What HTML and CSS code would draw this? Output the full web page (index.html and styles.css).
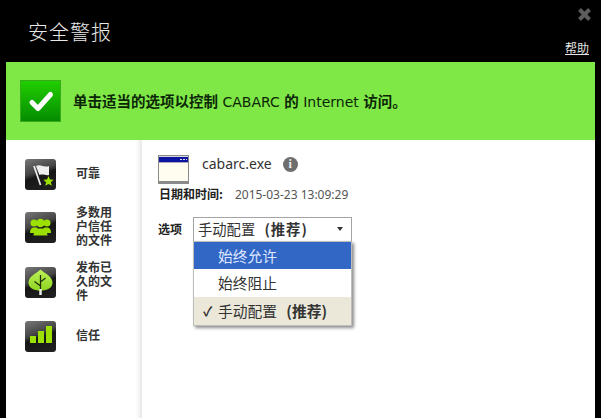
FILE: index.html
```html
<!DOCTYPE html>
<html lang="zh">
<head>
<meta charset="utf-8">
<title>安全警报</title>
<link rel="stylesheet" href="styles.css">
</head>
<body>
<div class="window">
  <header class="header">
    <h1 class="title">安全警报</h1>
    <svg class="close" width="15" height="15" viewBox="0 0 15 15"><path d="M2.500 2.500 12.500 12.500M12.500 2.500 2.500 12.500" stroke="#5c5c5c" stroke-width="4"/></svg>
    <a class="help">帮助</a>
  </header>
  <section class="banner">
    <div class="check">
      <svg width="41" height="42" viewBox="0 0 41 42"><path d="M12 22.500 18 28.500 30.500 14.500" fill="none" stroke="#fff" stroke-width="5" stroke-linecap="round" stroke-linejoin="round"/></svg>
    </div>
    <p class="banner-text"><b>单击适当的选项以控制</b> CABARC <b>的</b> Internet <b>访问。</b></p>
  </section>
  <section class="content">
    <aside class="sidebar">
      <div class="side-item">
        <div class="side-icon">
          <svg width="31" height="31" viewBox="0 0 31 31"><path d="M9 7 15.500 26" stroke="#eee" stroke-width="1.700"/><path d="M11 7c4-2.500 8 2 13 0v9c-3 1-6-1.500-9.500 0z" fill="#eee"/><path d="m23.500 17 1.500 3.500 3.700.3-2.800 2.400.9 3.600-3.300-1.900-3.300 1.900.9-3.600-2.800-2.400 3.700-.3z" fill="#9be000"/></svg>
        </div>
        <span class="side-label">可靠</span>
      </div>
      <div class="side-item">
        <div class="side-icon">
          <svg width="31" height="31" viewBox="0 0 31 31"><g fill="#9be000"><circle cx="9" cy="11" r="3.500"/><circle cx="22" cy="11" r="3.500"/><path d="M5 21c0-3.500 1-4.500 3-5.500h4l3 5.500zM26 21c0-3.500-1-4.500-3-5.500h-4l-3 5.500z"/><circle cx="15.500" cy="11" r="4.300"/><path d="M8.500 23.500c.5-5.500 3-6 4.500-7h5c1.500 1 4 1.500 4.500 7z"/></g></svg>
        </div>
        <span class="side-label">多数用户信任的文件</span>
      </div>
      <div class="side-item">
        <div class="side-icon">
          <svg width="31" height="31" viewBox="0 0 31 31"><defs><linearGradient id="leaf" x1="0" y1="0" x2="0" y2="1"><stop offset="0" stop-color="#bdf05a"/><stop offset="1" stop-color="#8fd620"/></linearGradient></defs><path d="M15.500 2.500C11 6.500 3.500 9.500 3.500 15.500c0 5.500 5 8 12 8s12-2.500 12-8c0-6-7.500-9-12-13z" fill="url(#leaf)"/><path d="M15.500 23v-15M15.500 19l-6-4.500M15.500 15l5-4" stroke="#24300c" stroke-width="1.300" fill="none"/><path d="M15.500 22v6" stroke="#eee" stroke-width="2.500"/></svg>
        </div>
        <span class="side-label">发布已久的文件</span>
      </div>
      <div class="side-item">
        <div class="side-icon">
          <svg width="31" height="31" viewBox="0 0 31 31"><g fill="#9be000"><rect x="5" y="15" width="6" height="7"/><rect x="13" y="10" width="6" height="12"/><rect x="21" y="5" width="6" height="17"/></g></svg>
        </div>
        <span class="side-label">信任</span>
      </div>
    </aside>
    <main class="main">
      <div class="file-row">
        <svg class="file-icon" width="31" height="29" viewBox="0 0 31 29"><rect x=".5" y=".5" width="30" height="28" fill="#fffdf0" stroke="#8a8a8a"/><rect x="1" y="1" width="29" height="1" fill="#d8d8d8"/><rect x="1" y="2" width="29" height="5" fill="#0a14a0"/><rect x="1" y="7" width="29" height="1" fill="#a8a8b8"/><path d="M22 4.500h2M25 4.500h2M28 4.500h1" stroke="#ddd"/><rect x="1" y="26" width="29" height="2" fill="#8a8a8a"/></svg>
        <span class="file-name">cabarc.exe</span>
        <span class="info">i</span>
      </div>
      <p class="meta"><b class="meta-label">日期和时间:</b><span class="meta-value">2015-03-23 13:09:29</span></p>
      <div class="option-row">
        <span class="option-label">选项</span>
        <div class="select">
          <span>手动配置 <b>(推荐)</b></span>
          <i class="arrow"></i>
          <ul class="menu">
            <li class="menu-item active">始终允许</li>
            <li class="menu-item">始终阻止</li>
            <li class="menu-item selected"><span class="tick">✓</span>手动配置 <b>(推荐)</b></li>
          </ul>
        </div>
      </div>
    </main>
  </section>
</div>
</body>
</html>
```
FILE: styles.css
```css
* { box-sizing: border-box; }
html, body { margin: 0; padding: 0; }
body {
  width: 601px;
  height: 418px;
  overflow: hidden;
  background: #000;
  font-family: "Noto Sans CJK SC", "Liberation Sans", sans-serif;
}
.window { display: flex; flex-direction: column; height: 418px; padding: 0 6px; }
.header { position: relative; height: 62px; flex: none; }
.title {
  margin: 0;
  position: absolute;
  left: 22px;
  top: 18px;
  font-size: 20px;
  line-height: 28px;
  font-weight: 300;
  letter-spacing: 1px;
  color: #e8e8e8;
}
.close { position: absolute; right: 3px; top: 7px; }
.help {
  position: absolute;
  right: 6px;
  top: 41px;
  font-size: 12px;
  line-height: 14px;
  color: #e4e4e4;
  text-decoration: underline;
}
.banner {
  flex: none;
  height: 78px;
  background: #7fe846;
  display: flex;
  align-items: center;
  gap: 12px;
  padding: 0 0 0 14px;
}
.check {
  width: 41px;
  height: 42px;
  background: linear-gradient(#22d000, #048a00);
  box-shadow: inset 0 0 0 1px #3caa1e;
}
.check svg { display: block; }
.banner-text {
  margin: 0;
  font-family: "DejaVu Sans", "Noto Sans CJK SC", sans-serif;
  font-size: 14px;
  line-height: 20px;
  color: #0b2606;
  white-space: nowrap;
}
.banner-text b { font-family: "Noto Sans CJK SC", sans-serif; font-size: 14.500px; font-weight: 700; }
.content { flex: 1; display: flex; background: #fff; min-height: 0; }
.sidebar {
  width: 136px;
  flex: none;
  padding: 19px 0 0 19px;
  background: linear-gradient(90deg, #fff 130px, #e8e8e8);
  display: flex;
  flex-direction: column;
}
.side-item { display: flex; align-items: center; gap: 20px; height: 31px; flex: none; }
.side-item:nth-child(2) { margin-top: 22px; }
.side-item:nth-child(3) { margin-top: 24px; }
.side-item:nth-child(4) { margin-top: 23px; }
.side-icon {
  width: 31px;
  height: 31px;
  flex: none;
  border-radius: 3px;
  background: linear-gradient(160deg, #787878 0%, #444 40%, #161616 52%, #222 100%);
}
.side-icon svg { display: block; }
.side-label {
  width: 39px;
  margin-bottom: 3px;
  font-size: 12px;
  line-height: 14px;
  font-weight: 700;
  color: #333;
}
.main { flex: 1; padding: 15px 0 0 16px; }
.file-row { display: flex; align-items: flex-start; height: 30px; }
.file-icon { display: block; flex: none; }
.file-name {
  margin-left: 13px;
  font-family: "Noto Sans", sans-serif;
  font-size: 14px;
  line-height: 17px;
  color: #333;
}
.info {
  margin: 2px 0 0 11px;
  width: 15px;
  height: 15px;
  border-radius: 50%;
  background: #6e6e6e;
  color: #eee;
  text-align: center;
  font: 700 12px/15px "Liberation Serif", serif;
}
.meta { margin: 0; padding-left: 1px; height: 17px; line-height: 17px; font-size: 12px; color: #222; }
.meta-label { font-weight: 700; }
.meta-value { margin-left: 12px; font-family: "Noto Sans", sans-serif; font-size: 12px; color: #555; }
.option-row { display: flex; margin-top: 15px; }
.option-label { margin-top: 4px; width: 35px; font-size: 12px; line-height: 16px; font-weight: 700; color: #222; }
.select {
  position: relative;
  width: 159px;
  height: 25px;
  border: 1px solid #a4a4a4;
  background: #fff;
  padding-left: 4px;
  font-size: 14.300px;
  line-height: 21px;
  word-spacing: 6px;
  color: #333;
  display: flex;
  justify-content: space-between;
}
.select > span > b { letter-spacing: 1px; }
.arrow {
  position: absolute;
  right: 8px;
  top: 9px;
  border: 3px solid transparent;
  border-top: 4px solid #333;
  border-bottom: 0;
}
.menu {
  position: absolute;
  left: -1px;
  top: 23px;
  width: 159px;
  margin: 0;
  padding: 0;
  list-style: none;
  border: 1px solid #bdbdbd;
  background: #fff;
  box-shadow: 2px 2px 3px rgba(0,0,0,.45);
}
.menu-item { position: relative; height: 28px; padding-left: 24px; font-size: 14.750px; line-height: 27px; color: #333; }
.active { height: 27px; background: #3367c6; color: #dfe8ff; }
.selected { background: #ebe8da; }
.tick { position: absolute; left: 9px; font-size: 13px; font-weight: 700; }
```
